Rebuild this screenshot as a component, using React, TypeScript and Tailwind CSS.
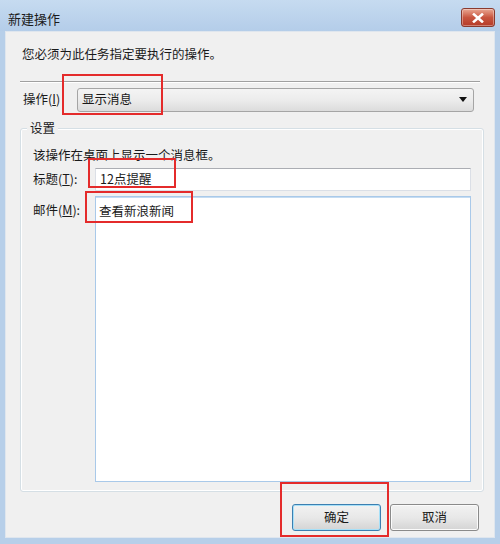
import React from "react";

const font = { fontFamily: '"Noto Sans CJK SC", "Noto Sans", sans-serif' };

// red annotation frame drawn over the dialog
const Mark = ({ className }: { className: string }) => (
  <div className={`absolute border-2 border-[#e42b2b] pointer-events-none ${className}`} />
);

const CloseButton = () => (
  <div className="w-[34px] h-[19px] rounded-[3px] border border-[#8a3a2e] bg-gradient-to-b from-[#e9a793] via-[#c8553f] to-[#b53a28] flex items-center justify-center shadow-[inset_0_0_0_1px_rgba(255,255,255,0.35)]">
    <svg width="12" height="10" viewBox="0 0 12 10">
      <path d="M2 1.5 L10 8.5 M10 1.5 L2 8.5" stroke="#ffffff" strokeWidth="2.6" strokeLinecap="square" />
    </svg>
  </div>
);

export default function App() {
  return (
    <div
      className="relative w-[500px] h-[544px] bg-[#b7cfe9] flex flex-col text-[12.5px] text-[#1a1a1a] leading-none overflow-hidden"
      style={font}
    >
      {/* title bar */}
      <div className="h-[31px] flex items-start justify-between bg-gradient-to-b from-[#c6dbf0] to-[#b4cde9]">
        <span className="pl-[8px] pt-[12px] text-[13px] text-[#1b1b1b]">新建操作</span>
        <div className="pt-[8px] pr-[5px]">
          <CloseButton />
        </div>
      </div>

      {/* client area */}
      <div className="mx-[5px] h-[507px] bg-[#f0f0f0] border border-[#dfe6ee] flex flex-col">
        <div className="ml-[16px] mt-[16px] self-start">您必须为此任务指定要执行的操作。</div>

        <div className="mt-[20px] mx-[14px] h-px bg-[#a0a0a0] shadow-[0_1px_0_#ffffff]" />

        {/* action row */}
        <div className="mt-[6px] flex items-center pl-[17px] pr-[20px]">
          <span className="w-[54px]">操作(<span className="underline">I</span>)</span>
          <div className="flex-1 h-[24px] rounded-[3px] border border-[#a5a5a5] bg-gradient-to-b from-[#f4f4f4] via-[#ececec] to-[#dcdcdc] flex items-center justify-between pl-[4px] pr-[6px]">
            <span>显示消息</span>
            <svg width="8" height="5" viewBox="0 0 8 5">
              <path d="M0 0 H8 L4 5 Z" fill="#111111" />
            </svg>
          </div>
        </div>

        {/* settings group */}
        <div className="relative mt-[16px] ml-[14px] mr-[10px] h-[364px] border border-[#d5dfe5] rounded-[3px] shadow-[inset_0_0_0_1px_#ffffff] flex flex-col pl-[12px] pr-[12px]">
          <span className="absolute -top-[7px] left-[6px] px-[3px] bg-[#f0f0f0]">设置</span>

          <p className="pt-[20px]">该操作在桌面上显示一个消息框。</p>

          <div className="mt-[7px] flex items-center">
            <span className="w-[62px]">标题(<span className="underline">T</span>):</span>
            <div className="flex-1 h-[23px] bg-white border border-[#dbdfe6] border-t-[#abadb3] flex items-center pl-[4px]">
              12点提醒
            </div>
          </div>

          <div className="mt-[5px] flex items-start">
            <span className="w-[62px] pt-[8px]">邮件(<span className="underline">M</span>):</span>
            <div className="flex-1 h-[286px] bg-white border border-[#a9c9e9] shadow-[inset_0_1px_0_#c5dcf2] pl-[3px] pt-[8px]">
              查看新浪新闻
            </div>
          </div>
        </div>

        {/* buttons */}
        <div className="mt-[12px] flex justify-end gap-[9px] pr-[15px]">
          <button
            className="w-[89px] h-[27px] rounded-[3px] border border-[#3c7fb1] bg-gradient-to-b from-[#f2f2f2] via-[#e8e8e8] to-[#d4d4d4] shadow-[inset_0_0_0_1px_#a7e0f8]"
            style={font}
          >
            确定
          </button>
          <button
            className="w-[89px] h-[27px] rounded-[3px] border border-[#8a8a8a] bg-gradient-to-b from-[#f2f2f2] via-[#e8e8e8] to-[#d4d4d4] shadow-[inset_0_0_0_1px_#fbfbfb]"
            style={font}
          >
            取消
          </button>
        </div>
      </div>

      {/* annotation frames */}
      <Mark className="left-[62px] top-[74px] w-[101px] h-[41px]" />
      <Mark className="left-[88px] top-[158px] w-[88px] h-[30px]" />
      <Mark className="left-[85px] top-[191px] w-[108px] h-[32px]" />
      <Mark className="left-[280px] top-[482px] w-[109px] h-[55px]" />
    </div>
  );
}
